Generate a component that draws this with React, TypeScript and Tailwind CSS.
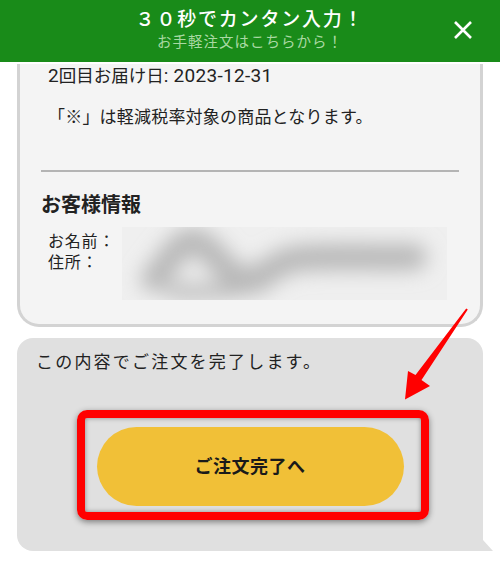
import React from "react";

const jp = { fontFamily: 'Roboto, "Noto Sans CJK JP", "Noto Sans", sans-serif' };

function CloseIcon() {
  return (
    <svg width="20" height="20" viewBox="0 0 20 20" fill="none">
      <path d="M2 2 L18 18 M18 2 L2 18" stroke="white" strokeWidth="2.6" strokeLinecap="butt" />
    </svg>
  );
}

function MaskedInfo() {
  // masked customer name/address
  return (
    <div className="w-[325px] h-[73px] bg-[#efefef] overflow-hidden">
      <svg width="325" height="73" viewBox="0 0 325 73">
        <defs>
          <filter id="smear" x="-20%" y="-60%" width="140%" height="220%">
            <feGaussianBlur stdDeviation="10" />
          </filter>
        </defs>
        <g filter="url(#smear)" stroke="#b8b8b8" fill="none" strokeLinecap="round" strokeLinejoin="round">
          <path d="M32 52 C45 38 55 16 70 14 C88 14 100 46 120 52 C140 56 150 36 172 32 C200 28 240 31 292 30" strokeWidth="26" />
          <path d="M50 64 C80 66 110 64 140 58" strokeWidth="14" />
        </g>
      </svg>
    </div>
  );
}

function Arrow() {
  return (
    <svg className="absolute inset-0 pointer-events-none" width="500" height="567" viewBox="0 0 500 567">
      <polygon
        fill="#ff0000"
        points="467.8,309.5 466.2,308.5 415.5,375 408,371 405,399.5 430,386 421.5,380"
      />
    </svg>
  );
}

export default function App() {
  return (
    <div className="relative w-[500px] h-[567px] bg-white overflow-hidden text-[#222]" style={jp}>
      <header className="relative h-[62px] bg-[#198b19] flex flex-col items-center pt-[8px]">
        <div className="text-white text-[19px] leading-[24px] tracking-[1.8px] font-medium">３０秒でカンタン入力！</div>
        <div className="mt-[2px] text-[#a9d9a3] text-[14.5px] leading-[18px] tracking-[1px]">お手軽注文はこちらから！</div>
        <div className="absolute right-[27px] top-[20px]">
          <CloseIcon />
        </div>
      </header>

      <main className="px-[17px]">
        <section className="bg-[#f4f4f4] border-x-[3px] border-b-[3px] border-[#d3d3d3] rounded-b-[22px] pb-[24px]">
          <p className="mt-[2px] pl-[28px] text-[17.5px] leading-[24px]">
            <span className="text-[19px]">2</span>回目お届け日<span className="text-[19px] tracking-[0.3px]">: 2023-12-31</span>
          </p>
          <p className="mt-[17px] pl-[28px] text-[17px] leading-[24px] tracking-[0.2px]">「※」は軽減税率対象の商品となります。</p>
          <div className="mt-[41px] mx-[21px] h-[2px] bg-[#b4b4b4]" />
          <h2 className="mt-[19px] pl-[21px] text-[20px] leading-[28px] font-bold">お客様情報</h2>
          <div className="mt-[8px] flex">
            <div className="w-[102px] pl-[28px] pt-[4px] text-[16px] leading-[21px] tracking-[0.8px]">
              <div>お名前：</div>
              <div>住所：</div>
            </div>
            <MaskedInfo />
          </div>
        </section>

        <section className="relative mt-[11px] bg-[#e0e0e0] rounded-[16px] rounded-br-none pt-[12px] pb-[45px]">
          <p className="pl-[19px] text-[17px] leading-[24px] tracking-[2.2px]">この内容でご注文を完了します。</p>
          <div className="mt-[53px] flex justify-center">
            <button className="w-[307px] h-[79px] rounded-full bg-[#f1c037] text-[18px] font-bold tracking-[0.5px] text-[#1a1a1a]">
              ご注文完了へ
            </button>
          </div>
          <div className="absolute left-[60px] top-[72px] w-[352px] h-[110px] border-[8px] border-[#ff0000] rounded-[10px] shadow-[0_2px_6px_rgba(0,0,0,0.45),inset_0_0_5px_rgba(0,0,0,0.4)]" />
          <div className="absolute right-[-10px] bottom-0 w-[10px] h-[11px] bg-[#e0e0e0] [clip-path:polygon(0_0,100%_100%,0_100%)]" />
        </section>
      </main>

      <Arrow />
    </div>
  );
}
